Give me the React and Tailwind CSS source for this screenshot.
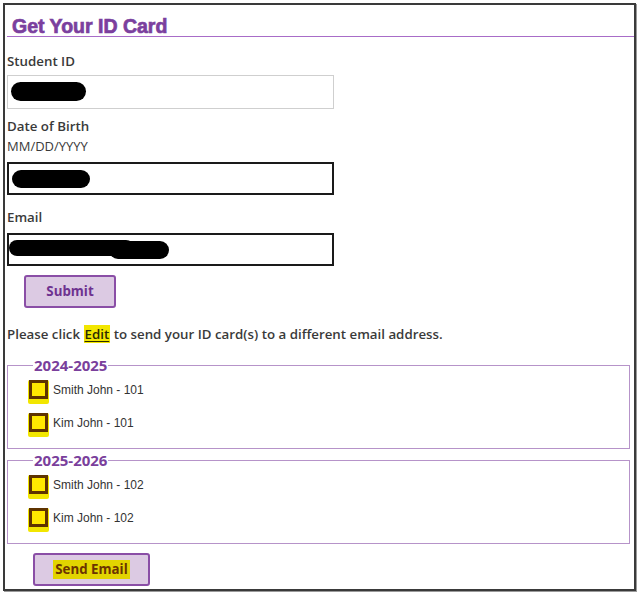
import React from "react";

function Check() {
  return (
    <span className="relative inline-flex w-[20px] h-[20px] shrink-0">
      <span className="absolute left-[-1px] top-[0px] w-[21px] h-[24px] bg-[#f2e600] rounded-[2px]" />
      <span className="relative w-[19px] h-[19px] border-[3px] border-[#5e3300] bg-[#ffe800]" />
    </span>
  );
}

function Item({ label }) {
  return (
    <div className="flex items-center h-[20px] pl-[21px]">
      <Check />
      <span className="ml-[4px] text-[12px] text-[#333] font-['Liberation_Sans',Arial,sans-serif]">{label}</span>
    </div>
  );
}

function Group({ year, items, className }) {
  return (
    <fieldset className={"ml-[2px] w-[623px] border-[1.5px] border-[#b693c9] p-0 " + className}>
      <legend className="ml-[25px] px-[1px] text-[15px] leading-[18px] font-bold text-[#7a3f9c]">{year}</legend>
      <div className="pt-[6px] pb-[15px] flex flex-col gap-[13px]">
        {items.map((t) => (
          <Item key={t} label={t} />
        ))}
      </div>
    </fieldset>
  );
}

export default function App() {
  return (
    <div className="w-[640px] h-[595px] bg-white pt-[3px] pl-[3px] font-['Open_Sans','Lato',sans-serif]">
      <div className="w-[633px] h-[588px] border-2 border-[#3a3a3a] shadow-[1px_1px_0_#9a9a9a]">
        <div className="h-[32px] border-b-[1.5px] border-[#a86cc8] ml-[2px] pl-[5px] flex items-end">
          <h1 className="text-[19.5px] leading-[20px] font-bold text-[#7b3f9e] font-['Liberation_Sans',Arial,sans-serif] [-webkit-text-stroke:0.7px_#7b3f9e]">
            Get Your ID Card
          </h1>
        </div>
        <div className="pl-[2px]">
          <div className="mt-[15px] text-[13.3px] leading-[18px] font-semibold text-[#3a3a3a]">Student ID</div>
          <div className="mt-[5px] w-[327px] h-[34px] border border-[#cfcfcf] relative">
            <div className="absolute left-[3px] top-[6px] w-[75px] h-[19px] bg-black rounded-full" />
          </div>
          <div className="mt-[8px] text-[13.3px] leading-[18px] font-semibold text-[#3a3a3a]">Date of Birth</div>
          <div className="mt-[2px] text-[13px] leading-[18px] text-[#3a3a3a]">MM/DD/YYYY</div>
          <div className="mt-[7px] w-[327px] h-[33px] border-2 border-[#1a1a1a] relative">
            <div className="absolute left-[3px] top-[6px] w-[78px] h-[18px] bg-black rounded-full" />
          </div>
          <div className="mt-[13px] text-[13.3px] leading-[18px] font-semibold text-[#3a3a3a]">Email</div>
          <div className="mt-[7px] w-[327px] h-[33px] border-2 border-[#1a1a1a] relative">
            <div className="absolute left-[0px] top-[5px] w-[125px] h-[16px] bg-black rounded-full" />
            <div className="absolute left-[100px] top-[6px] w-[60px] h-[18px] bg-black rounded-full" />
          </div>
          <button className="mt-[9px] ml-[17px] w-[92px] h-[33px] bg-[#dccae3] border-2 border-[#8a4ea6] rounded-[3px] text-[13.3px] font-bold text-[#6e3290] flex items-center justify-center">
            Submit
          </button>
          <p className="mt-[17px] text-[13.3px] leading-[18px] font-semibold text-[#3a3a3a]">
            Please click{" "}
            <span className="bg-[#f2e600] underline underline-offset-2 text-[#2a2a00] px-[1px]">Edit</span> to send your ID
            card(s) to a different email address.
          </p>
        </div>
        <Group className="mt-[13px]" year="2024-2025" items={["Smith John - 101", "Kim John - 101"]} />
        <Group className="mt-[2px]" year="2025-2026" items={["Smith John - 102", "Kim John - 102"]} />
        <button className="mt-[9px] ml-[28px] w-[117px] h-[33px] bg-[#dccae3] border-2 border-[#8a4ea6] rounded-[3px] flex items-center justify-center">
          <span className="bg-[#e2d400] px-[2px] text-[13.3px] font-bold text-[#6b3300]">Send Email</span>
        </button>
      </div>
    </div>
  );
}
